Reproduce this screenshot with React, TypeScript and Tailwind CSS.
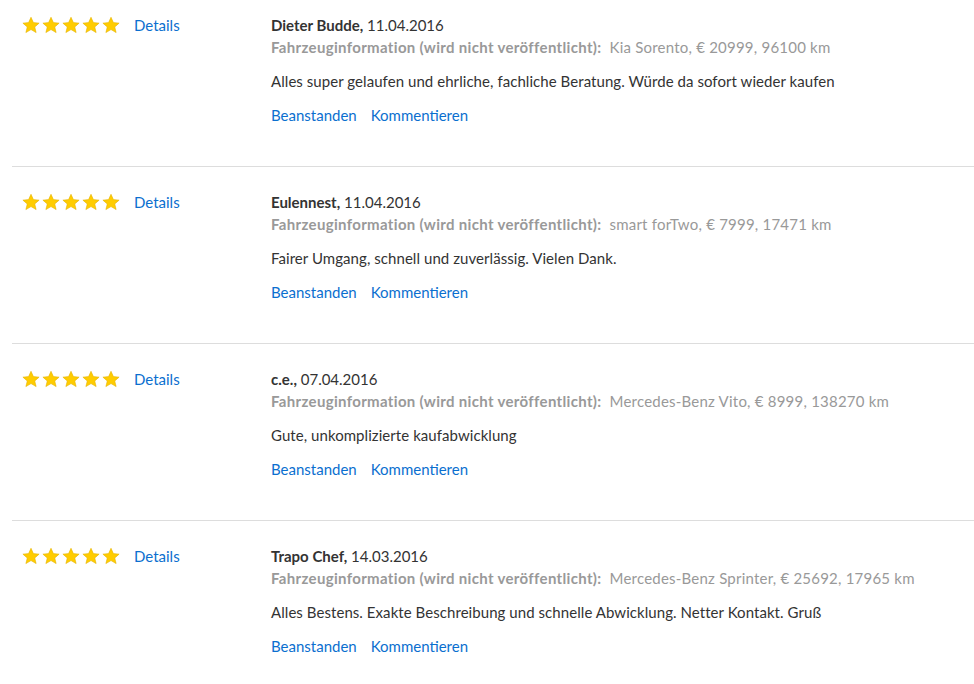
import React from "react";

interface Review {
  author: string;
  date: string;
  vehicle: string;
  text: string;
}

const reviews: Review[] = [
  {
    author: "Dieter Budde",
    date: "11.04.2016",
    vehicle: "Kia Sorento, € 20999, 96100 km",
    text: "Alles super gelaufen und ehrliche, fachliche Beratung. Würde da sofort wieder kaufen",
  },
  {
    author: "Eulennest",
    date: "11.04.2016",
    vehicle: "smart forTwo, € 7999, 17471 km",
    text: "Fairer Umgang, schnell und zuverlässig. Vielen Dank.",
  },
  {
    author: "c.e.",
    date: "07.04.2016",
    vehicle: "Mercedes-Benz Vito, € 8999, 138270 km",
    text: "Gute, unkomplizierte kaufabwicklung",
  },
  {
    author: "Trapo Chef",
    date: "14.03.2016",
    vehicle: "Mercedes-Benz Sprinter, € 25692, 17965 km",
    text: "Alles Bestens. Exakte Beschreibung und schnelle Abwicklung. Netter Kontakt. Gruß",
  },
];

function Star() {
  return (
    <svg width="18" height="18" viewBox="0 0 24 23" className="block">
      <path
        d="M12 1.2l3.2 7.1 7.6.7-5.8 5.1 1.8 7.5L12 17.6l-6.8 4 1.8-7.5L1.2 9l7.6-.7z"
        fill="#ffcc00"
        stroke="#e6b400"
        strokeWidth="0.8"
        strokeLinejoin="round"
      />
    </svg>
  );
}

function ReviewRow({ review }: { review: Review }) {
  return (
    <div className="flex border-b border-[#dddddd] pt-6 pb-10 first:pt-[14px]">
      <div className="flex w-[259px] shrink-0 items-center self-start pl-[10px] h-[22px]">
        <div className="flex gap-[2px]">
          {[0, 1, 2, 3, 4].map((i) => (
            <Star key={i} />
          ))}
        </div>
        <a href="#" className="ml-[14px] text-[#0b6fcf]">
          Details
        </a>
      </div>
      <div className="flex flex-col">
        <div className="text-[#333333] leading-[22px]">
          <span className="font-bold">{review.author},</span> {review.date}
        </div>
        <div className="text-[#999999] leading-[22px]">
          <span className="font-bold tracking-[0.33px]">
            Fahrzeuginformation (wird nicht veröffentlicht):
          </span>
          <span className="ml-2 tracking-[0.22px]">{review.vehicle}</span>
        </div>
        <p className="mt-3 text-[#333333] leading-[22px] tracking-[0.06px]">{review.text}</p>
        <div className="mt-3 flex gap-[14px] text-[#0b6fcf] leading-[22px]">
          <a href="#">Beanstanden</a>
          <a href="#">Kommentieren</a>
        </div>
      </div>
    </div>
  );
}

export default function App() {
  return (
    <div className="min-h-screen bg-white pl-[12px] text-[15px] font-['Lato',sans-serif] overflow-hidden">
      {reviews.map((r) => (
        <ReviewRow key={r.author} review={r} />
      ))}
    </div>
  );
}
